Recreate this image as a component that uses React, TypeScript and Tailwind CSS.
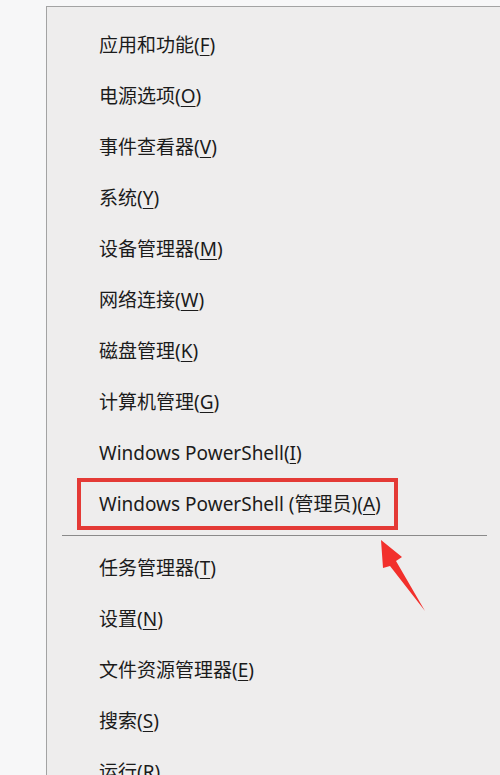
import React from "react"

type Item = { label: string; key: string; space?: boolean }

const top: Item[] = [
  { label: "应用和功能", key: "F" },
  { label: "电源选项", key: "O" },
  { label: "事件查看器", key: "V" },
  { label: "系统", key: "Y" },
  { label: "设备管理器", key: "M" },
  { label: "网络连接", key: "W" },
  { label: "磁盘管理", key: "K" },
  { label: "计算机管理", key: "G" },
  { label: "Windows PowerShell", key: "I" },
  { label: "Windows PowerShell (管理员)", key: "A" },
]

const bottom: Item[] = [
  { label: "任务管理器", key: "T" },
  { label: "设置", key: "N" },
  { label: "文件资源管理器", key: "E" },
  { label: "搜索", key: "S" },
  { label: "运行", key: "R" },
]

function Row({ item, boxed }: { item: Item; boxed?: boolean }) {
  return (
    <div className="relative h-[51px] flex items-center pl-[52px] text-[19px] text-[#1b1b1b] whitespace-nowrap">
      <span>
        {item.label}(<span className="underline underline-offset-[3px] decoration-1">{item.key}</span>)
      </span>
      {boxed && (
        <div className="absolute left-[30px] top-[-1px] w-[321px] h-[52px] border-[4px] border-[#e43a36]" />
      )}
    </div>
  )
}

export default function App() {
  return (
    <div
      className="relative w-[500px] h-[775px] overflow-hidden bg-[#f7f7f8] pt-[6px] pl-[46px]"
      style={{ fontFamily: '"Segoe UI", "Noto Sans", "Noto Sans CJK SC", sans-serif' }}
    >
      <div className="h-full border-l border-t border-[#a3a3a3] bg-[#eeeded] pt-[13px]">
        {top.map((it, i) => (
          <Row key={it.key} item={it} boxed={i === top.length - 1} />
        ))}
        <div className="h-[13px] pt-[5px]">
          <div className="ml-[15px] w-[425px] h-px bg-[#8a8a8a]" />
        </div>
        {bottom.map((it) => (
          <Row key={it.key} item={it} />
        ))}
      </div>

      {/* red arrow annotation */}
      <svg className="absolute left-0 top-0" width="500" height="775" viewBox="0 0 500 775">
        <polygon
          points="381,540 402,557 396,561 425,611 390,566 383,568"
          fill="#f2302c"
        />
      </svg>
    </div>
  )
}
